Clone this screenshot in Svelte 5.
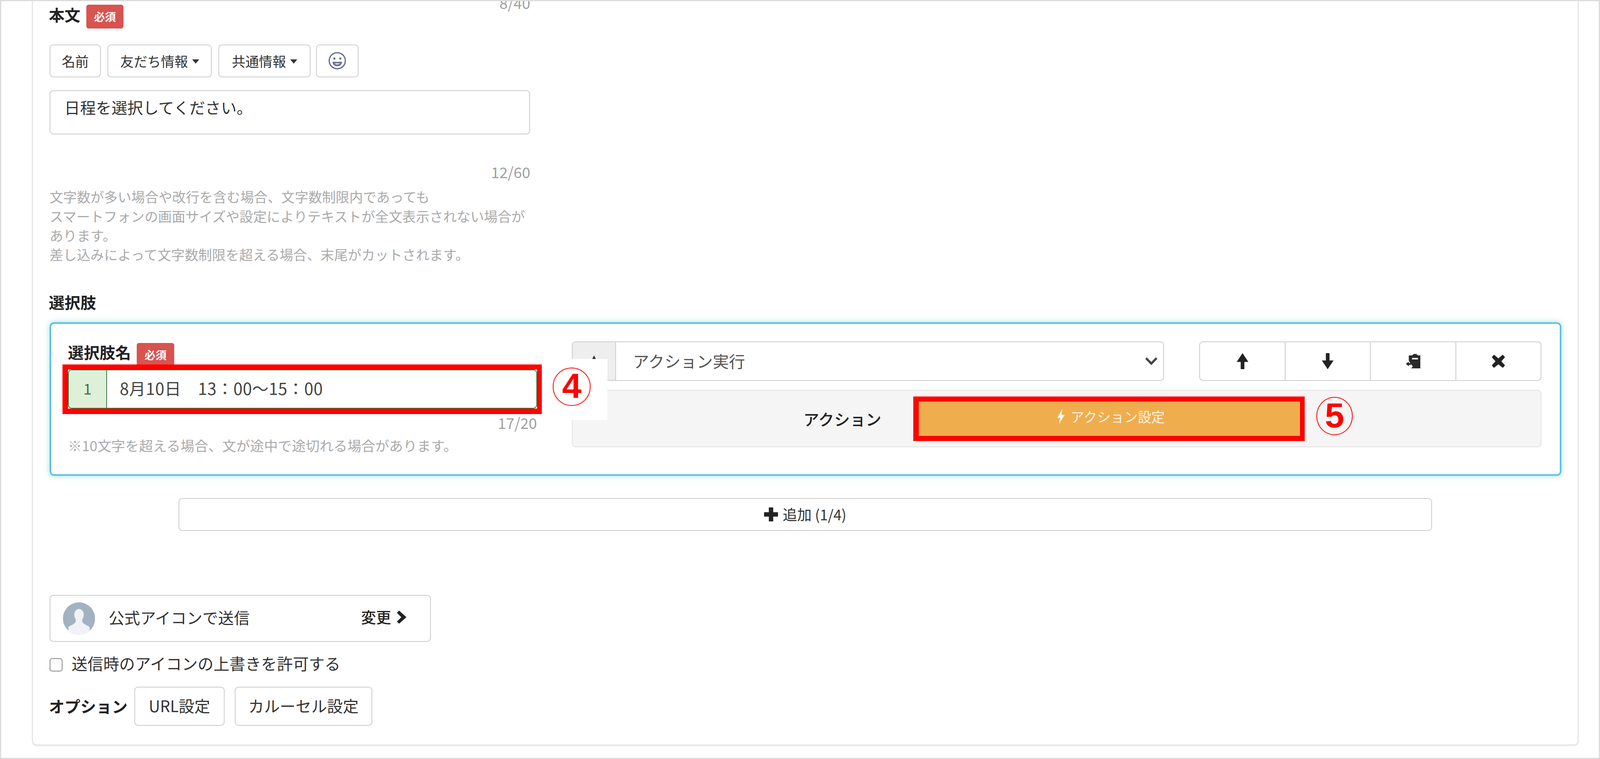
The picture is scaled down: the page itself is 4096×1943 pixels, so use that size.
<script>
  const help = "文字数が多い場合や改行を含む場合、文字数制限内であっても";
  const help2 = "スマートフォンの画面サイズや設定によりテキストが全文表示されない場合があります。";
  const help3 = "差し込みによって文字数制限を超える場合、末尾がカットされます。";
</script>

<div class="root">
  <div class="frame">
    <div class="panel">
      <div class="col">
        <div class="label-row">
          <div class="label-group">
            <span class="lbl">本文</span>
            <span class="badge">必須</span>
          </div>
          <span class="count top-count">8/40</span>
        </div>
        <div class="tools">
          <button class="btn name">名前</button>
          <button class="btn friend">友だち情報<i class="caret"></i></button>
          <button class="btn common">共通情報<i class="caret"></i></button>
          <button class="btn emoji" aria-label="絵文字">
            <svg viewBox="0 0 50 50" width="50" height="50" fill="none" stroke="#6b6f8e" stroke-width="3.500">
              <circle cx="25" cy="25" r="22"/>
              <circle cx="17" cy="19" r="3" fill="#6b6f8e" stroke="none"/>
              <circle cx="33" cy="19" r="3" fill="#6b6f8e" stroke="none"/>
              <path d="M12 28h26c0 7.500-5.500 12-13 12S12 35.500 12 28z" fill="#6b6f8e" stroke="none"/>
              <path d="M18 32h14c-1.500 2.500-4 3.500-7 3.500S19.500 34.500 18 32z" fill="#e6e7ee" stroke="none"/>
            </svg>
          </button>
        </div>
        <div class="textarea">日程を選択してください。</div>
        <div class="count count-60">12/60</div>
        <p class="help">{help}<br />{help2}<br />{help3}</p>
      </div>

      <div class="lbl section">選択肢</div>

      <div class="card">
        <div class="card-left">
          <div class="label-group">
            <span class="lbl">選択肢名</span>
            <span class="badge">必須</span>
          </div>
          <div class="input-wrap">
            <div class="input-group">
              <span class="addon">1</span>
              <span class="input-text">8月10日　13：00～15：00</span>
            </div>
            <div class="mark mark-4"></div>
            <div class="patch">
              <div class="circled"><span>4</span></div>
            </div>
          </div>
          <div class="count count-20">17/20</div>
          <div class="note">※10文字を超える場合、文が途中で途切れる場合があります。</div>
        </div>

        <div class="card-right">
          <div class="top-row">
            <div class="select-group">
              <span class="select-addon">
                <svg viewBox="0 0 40 40" width="40" height="40"><path d="M20 4 36 36H4z" fill="#333"/></svg>
              </span>
              <span class="select-value">アクション実行</span>
              <svg class="chev" viewBox="0 0 35 24" width="35" height="24" fill="none" stroke="#444" stroke-width="6"><path d="M3 4l14.500 15L32 4"/></svg>
            </div>
            <div class="btn-group">
              <button aria-label="上へ">
                <svg viewBox="0 0 36 44" width="36" height="44"><path d="M18 0 34 24H23v20H13V24H2z" fill="#222"/></svg>
              </button>
              <button aria-label="下へ">
                <svg viewBox="0 0 36 44" width="36" height="44"><path d="M18 44 34 20H23V0H13v20H2z" fill="#222"/></svg>
              </button>
              <button aria-label="コピー">
                <svg viewBox="0 0 40 40" width="40" height="40">
                  <path d="M8 4h10c0-2 3-4 7-4s7 2 7 4h8v36H14l5-6-7-9-4-7z" fill="#2a2a2a"/>
                  <path d="M17 11h16v4H17z" fill="#fff"/>
                  <path d="M0 27l8-6v4h6v5H8v4z" fill="#2a2a2a"/>
                </svg>
              </button>
              <button aria-label="削除">
                <svg viewBox="0 0 36 36" width="36" height="36"><path d="M6 0 18 10 30 0l6 7-10 11 10 11-6 7-12-10L6 36l-6-7 10-11L0 7z" fill="#222"/></svg>
              </button>
            </div>
          </div>
          <div class="well">
            <span class="well-label">アクション</span>
            <div class="action-wrap">
              <button class="action">
                <svg viewBox="0 0 24 40" width="24" height="40"><path d="M15 0 2 23h8L6 40l16-25h-9z" fill="#fff"/></svg>
                <span class="action-text">アクション設定</span>
              </button>
              <div class="mark mark-5"></div>
              <div class="circled five"><span>5</span></div>
            </div>
          </div>
        </div>
      </div>

      <button class="add">
        <svg viewBox="0 0 38 38" width="38" height="38"><path d="M13 0h12v13h13v12H25v13H13V25H0V13h13z" fill="#222"/></svg>
        <span>追加 (1/4)</span>
      </button>

      <div class="sender">
        <svg class="avatar" viewBox="0 0 88 88" width="88" height="88">
          <defs><clipPath id="av"><circle cx="44" cy="44" r="44"/></clipPath></defs>
          <circle cx="44" cy="44" r="44" fill="#a3b2c2"/>
          <g clip-path="url(#av)" fill="#f0f2f7">
            <ellipse cx="44" cy="34" rx="13" ry="16"/>
            <path d="M35 44h18v9c3 6 12 9 20 14v21H15V67c8-5 17-8 20-14z"/>
          </g>
        </svg>
        <span class="sender-name">公式アイコンで送信</span>
        <span class="change">変更</span>
        <svg class="next" viewBox="0 0 26 36" width="26" height="36"><path d="M6 0 26 18 6 36 0 30 12 18 0 6z" fill="#222"/></svg>
      </div>

      <label class="check">
        <input type="checkbox" />
        <span>送信時のアイコンの上書きを許可する</span>
      </label>

      <div class="options">
        <span class="opt-label">オプション</span>
        <button class="btn url">URL設定</button>
        <button class="btn carousel">カルーセル設定</button>
      </div>
    </div>
  </div>
</div>

<style>
  :global(body) { margin: 0; background: #fff; overflow: hidden; }
  .root {
    zoom: 0.93794;
    width: 4367px;
    height: 2072px;
    font-family: "Noto Sans CJK JP", "Liberation Sans", sans-serif;
    color: #333;
  }
  .frame {
    box-sizing: border-box;
    width: 100%;
    height: 100%;
    border: 4px solid #dcdcdc;
    padding: 0 55px 35px 84px;
    overflow: hidden;
    display: flex;
  }
  .panel {
    flex: 1;
    box-sizing: border-box;
    border: 3px solid #ddd;
    border-top: 0;
    border-radius: 0 0 12px 12px;
    padding: 10px 45px 0 46px;
    box-shadow: 0 3px 4px rgba(0,0,0,.06);
    min-width: 0;
  }
  button { font-family: inherit; color: inherit; margin: 0; }
  .col { width: 1312px; }
  .label-row { display: flex; justify-content: space-between; align-items: flex-start; height: 65px; }
  .label-group { display: flex; align-items: flex-start; height: 65px; }
  .lbl { font-size: 43px; font-weight: 700; line-height: 50px; color: #222; margin-top: 2px; }
  .panel > .lbl, .label-row .lbl { margin-left: -2px; }
  .badge {
    box-sizing: border-box;
    width: 102px; height: 65px; margin-left: 16px;
    background: #d9534f; color: #fff; border-radius: 6px;
    font-size: 30px; font-weight: 700; line-height: 65px; text-align: center;
  }
  .count { font-size: 41px; line-height: 40px; color: #a0a0a0; text-align: right; }
  .top-count { margin-top: -26px; }
  .tools { display: flex; gap: 18px; margin-top: 43px; height: 90px; }
  .btn {
    box-sizing: border-box;
    background: #fff;
    border: 3px solid #ccc;
    border-radius: 10px;
    font-size: 37px;
    line-height: 1;
    padding: 0;
    display: flex; align-items: center; justify-content: center;
  }
  .name { width: 140px; }
  .friend { width: 285px; }
  .common { width: 251px; }
  .emoji { width: 116px; margin-left: -3px; }
  .caret {
    display: inline-block; margin-left: 11px; margin-top: 4px;
    border-top: 12px solid #333; border-left: 10px solid transparent; border-right: 10px solid transparent;
  }
  .textarea {
    box-sizing: border-box;
    margin-top: 35px; height: 121px;
    border: 3px solid #ccc; border-radius: 10px;
    padding: 15px 38px 0;
    font-size: 43px; line-height: 58px; color: #333;
  }
  .count-60 { margin-top: 82px; }
  .help { margin: 22px 0 0; font-size: 37.200px; line-height: 52.500px; color: #aaa; }
  .section { margin-top: 79px; }
  .card {
    box-sizing: border-box;
    margin-top: 30px;
    height: 418px;
    border: 5px solid #5bc0de;
    border-radius: 12px;
    box-shadow: 0 0 16px rgba(91,192,222,.55);
    display: flex;
    gap: 95px;
    padding: 48px 48px 0 46px;
  }
  .card-left { width: 1280px; padding-top: 4px; flex: none; box-sizing: border-box; }
  .card-left .lbl { margin-top: 0; }
  .input-wrap { position: relative; margin-top: 7px; height: 107px; }
  .input-group {
    box-sizing: border-box; height: 107px; display: flex;
    border: 3px solid #3c763d; border-radius: 10px; overflow: hidden;
    background: #fff;
  }
  .addon {
    width: 102px; flex: none; background: #dff0d8; color: #3c763d;
    border-right: 3px solid #3c763d;
    font-size: 41px; line-height: 96px; text-align: center;
  }
  .input-text { padding-left: 35px; font-size: 45px; letter-spacing: .6px; line-height: 96px; color: #444; white-space: pre; }
  .mark { position: absolute; border-style: solid; border-color: #f00; box-sizing: border-box; pointer-events: none; }
  .mark-4 { inset: -14px -13px -15px -15px; border-width: 14px 13px 15px 15px; }
  .patch {
    position: absolute; z-index: 2;
    left: 1293px; top: -29px; width: 179px; height: 167px;
    background: #fff; box-sizing: border-box; padding: 24px 0 0 30px;
  }
  .circled {
    box-sizing: border-box;
    width: 104px; height: 104px; border: 3px solid #f00; border-radius: 50%;
    color: #f00; font-family: "Liberation Sans", sans-serif; font-weight: 700;
    font-size: 95px; line-height: 96px; text-align: center;
  }
  .circled.five { position: absolute; left: 1085px; top: -13px; width: 100px; }
  .count-20 { margin-top: 18px; }
  .note { margin-top: 18px; font-size: 38px; line-height: 50px; color: #aaa; white-space: nowrap; }
  .card-right { width: 2647px; flex: none; }
  .top-row { display: flex; gap: 96px; height: 107px; }
  .select-group {
    box-sizing: border-box; width: 1617px; height: 107px; display: flex; align-items: center;
    border: 3px solid #ccc; border-radius: 10px; overflow: hidden;
  }
  .select-addon {
    box-sizing: border-box; width: 119px; height: 100%; flex: none;
    background: #eee; border-right: 3px solid #ccc;
    display: flex; align-items: center; justify-content: center;
  }
  .select-value { flex: 1; padding-left: 46px; padding-bottom: 3px; font-size: 44px; line-height: 1; color: #555; }
  .chev { margin-right: 16px; flex: none; }
  .btn-group { flex: 1; display: flex; }
  .btn-group button {
    flex: 1; box-sizing: border-box; background: #fff;
    border: 3px solid #ccc; border-left-width: 0; padding: 0;
    display: flex; align-items: center; justify-content: center;
  }
  .btn-group button:first-child { border-left-width: 3px; border-radius: 10px 0 0 10px; }
  .btn-group button:last-child { border-radius: 0 10px 10px 0; }
  .well {
    box-sizing: border-box; margin-top: 25px; height: 156px;
    background: #f5f5f5; border: 3px solid #e3e3e3; border-radius: 10px;
    display: flex; padding-top: 30px; gap: 102px;
  }
  .well-label { width: 843px; height: 93px; text-align: right; font-size: 43px; font-weight: 500; line-height: 93px; color: #222; }
  .action-wrap { position: relative; width: 1040px; height: 93px; }
  .action {
    box-sizing: border-box; width: 100%; height: 100%;
    background: #f0ad4e; border: 0; border-bottom: 3px solid #eea236; color: #fff;
    font-size: 37px; line-height: 1; padding: 0 0 10px 8px;
    display: flex; align-items: center; justify-content: center; gap: 14px;
  }
  .action-text { opacity: .88; }
  .mark-5 { inset: -14px -13px -14px -15px; border-width: 14px 13px 14px 15px; }
  .add {
    box-sizing: border-box; display: flex; align-items: center; justify-content: center; gap: 13px;
    margin: 61px 0 0 352px; width: 3421px; height: 90px;
    background: #fff; border: 3px solid #ccc; border-radius: 10px; padding: 0;
    font-size: 39.500px; line-height: 1;
  }
  .sender {
    box-sizing: border-box; display: flex; align-items: center;
    margin-top: 175px; width: 1041px; height: 128px;
    border: 3px solid #ccc; border-radius: 10px; padding-left: 34px;
  }
  .avatar { flex: none; }
  .sender-name { margin-left: 37px; margin-top: -6px; font-size: 43px; line-height: 1; width: 689px; }
  .change { font-size: 41px; line-height: 1; font-weight: 500; margin-top: -10px; color: #222; }
  .next { margin-left: 16px; margin-top: -8px; flex: none; }
  .check { display: flex; align-items: center; margin-top: 34px; height: 50px; font-size: 43.300px; line-height: 50px; }
  .check input {
    appearance: none; box-sizing: border-box; margin: 8px 25px 0 0;
    width: 35px; height: 36px; border: 3px solid #8a8a8a; border-radius: 7px; background: #fff;
  }
  .options { display: flex; align-items: center; margin-top: 38px; height: 107px; }
  .opt-label { font-size: 43px; font-weight: 700; color: #222; line-height: 1; margin-right: 18px; margin-left: -2px; padding-bottom: 2px; }
  .options .btn { height: 107px; font-size: 43px; padding-bottom: 3px; }
  .url { width: 247px; }
  .carousel { width: 376px; margin-left: 27px; }
</style>
